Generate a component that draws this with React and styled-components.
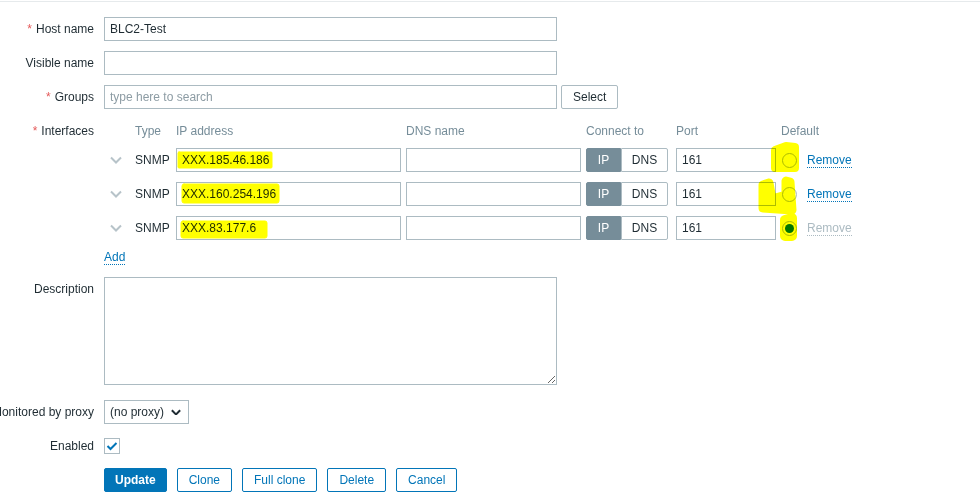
import styled, { createGlobalStyle } from "styled-components";

const GlobalStyle = createGlobalStyle`
  body {
    margin: 0;
    background: #fff;
    font-family: "Liberation Sans", Arial, sans-serif;
    font-size: 12px;
    color: #1f2c33;
  }
`;

const Page = styled.div`
  position: relative;
  isolation: isolate;
  width: 980px;
  height: 504px;
  overflow: hidden;
  background: #fff;
  box-sizing: border-box;
  padding-top: 1px;
`;

const TopRule = styled.div`
  height: 1px;
  background: #e6eaec;
`;

const Form = styled.div`
  display: flex;
  flex-direction: column;
  gap: 10px;
  padding-top: 15px;
`;

const FormRow = styled.div`
  display: flex;
  align-items: flex-start;
  gap: 10px;
  margin-top: ${(p) => p.$offset || 0}px;
`;

const Label = styled.div`
  width: 94px;
  flex-shrink: 0;
  height: 24px;
  display: flex;
  justify-content: flex-end;
  align-items: center;
  white-space: nowrap;
`;

const Required = styled.span`
  color: #e45959;
  margin-right: 4px;
`;

const Field = styled.div`
  display: flex;
  align-items: center;
  gap: ${(p) => p.$gap || 0}px;
  min-height: 24px;
`;

const TextInput = styled.input`
  box-sizing: border-box;
  width: ${(p) => p.$width}px;
  height: 24px;
  margin: 0;
  padding: 0 5px;
  border: 1px solid #acbbc2;
  border-radius: 0;
  background: #fff;
  font: inherit;
  color: #1f2c33;
  outline: none;

  &::placeholder {
    color: #8d9ca4;
  }
`;

const TextArea = styled.textarea`
  display: block;
  box-sizing: border-box;
  width: 453px;
  height: 108px;
  margin: 0;
  padding: 4px 5px;
  border: 1px solid #acbbc2;
  font: inherit;
  color: #1f2c33;
  resize: both;
  outline: none;
`;

const GreyButton = styled.button`
  box-sizing: border-box;
  height: 24px;
  padding: 0 11px;
  border: 1px solid #acbbc2;
  border-radius: 2px;
  background: #fff;
  font: inherit;
  color: #1f2c33;
`;

const Table = styled.div`
  display: flex;
  flex-direction: column;
`;

const columns = "31px 41px 230px 180px 90px 105px auto";

const HeadRow = styled.div`
  display: grid;
  grid-template-columns: ${columns};
  height: 24px;
  align-items: center;
  margin-bottom: 5px;
  color: #768d99;
`;

const IfaceRow = styled.div`
  display: grid;
  grid-template-columns: ${columns};
  height: 24px;
  align-items: center;
  margin-bottom: 10px;
`;

const Caret = styled.div`
  display: flex;
  padding-left: 6px;
`;

const Toggle = styled.div`
  display: flex;
  width: 82px;
  height: 24px;
  box-sizing: border-box;
`;

const ToggleSide = styled.div`
  box-sizing: border-box;
  display: flex;
  align-items: center;
  justify-content: center;
  height: 24px;
  width: ${(p) => (p.$on ? 35 : 47)}px;
  background: ${(p) => (p.$on ? "#768d99" : "#fff")};
  color: ${(p) => (p.$on ? "#fff" : "#1f2c33")};
  border: 1px solid ${(p) => (p.$on ? "#768d99" : "#acbbc2")};
  border-radius: ${(p) => (p.$on ? "2px 0 0 2px" : "0 2px 2px 0")};
`;

const DefaultCell = styled.div`
  display: flex;
  align-items: center;
  padding-left: 1px;
  gap: 10px;
`;

const Radio = styled.span`
  box-sizing: border-box;
  width: 15px;
  height: 15px;
  border-radius: 50%;
  border: 1px solid #acbbc2;
  background: #fff;
  display: flex;
  align-items: center;
  justify-content: center;

  &::after {
    content: "";
    display: ${(p) => (p.$checked ? "block" : "none")};
    width: 9px;
    height: 9px;
    border-radius: 50%;
    background: #0275b8;
  }
`;

const Link = styled.span`
  color: ${(p) => (p.$disabled ? "#acbbc2" : "#0275b8")};
  border-bottom: 1px dotted ${(p) => (p.$disabled ? "#acbbc2" : "#0275b8")};
  line-height: 14px;
  cursor: pointer;
`;

const AddLine = styled.div`
  height: 17px;
`;

const SelectBox = styled.div`
  box-sizing: border-box;
  width: 85px;
  height: 24px;
  border: 1px solid #acbbc2;
  display: flex;
  align-items: center;
  justify-content: space-between;
  padding: 0 7px 0 5px;
`;

const CheckBox = styled.span`
  box-sizing: border-box;
  width: 16px;
  height: 16px;
  border: 1px solid #acbbc2;
  display: flex;
  align-items: center;
  justify-content: center;
`;

const Buttons = styled.div`
  display: flex;
  gap: 10px;
  padding-left: 104px;
`;

const ActionButton = styled.button`
  box-sizing: border-box;
  height: 24px;
  padding: 0 ${(p) => (p.$primary ? 10 : 11)}px;
  border: 1px solid #0275b8;
  border-radius: 2px;
  background: ${(p) => (p.$primary ? "#0275b8" : "#fff")};
  color: ${(p) => (p.$primary ? "#fff" : "#0275b8")};
  font: inherit;
  font-weight: ${(p) => (p.$primary ? "bold" : "normal")};
`;

const Marker = styled.svg`
  position: absolute;
  left: 0;
  top: 0;
  pointer-events: none;
  mix-blend-mode: multiply;
`;

const interfaces = [
  { ip: "XXX.185.46.186", main: false },
  { ip: "XXX.160.254.196", main: false },
  { ip: "XXX.83.177.6", main: true },
];

const ChevronDown = ({ color, weight, size = 12 }) => (
  <svg width={size} height={size * 0.67} viewBox="0 0 12 8">
    <path d="M1 1.5 L6 6.5 L11 1.5" fill="none" stroke={color} strokeWidth={weight} />
  </svg>
);

const App = () => (
  <Page>
    <GlobalStyle />
    <TopRule />
    <Form>
      <FormRow>
        <Label>
          <Required>*</Required>Host name
        </Label>
        <Field>
          <TextInput $width={453} defaultValue="BLC2-Test" />
        </Field>
      </FormRow>
      <FormRow>
        <Label>Visible name</Label>
        <Field>
          <TextInput $width={453} defaultValue="" />
        </Field>
      </FormRow>
      <FormRow>
        <Label>
          <Required>*</Required>Groups
        </Label>
        <Field $gap={4}>
          <TextInput $width={453} placeholder="type here to search" />
          <GreyButton>Select</GreyButton>
        </Field>
      </FormRow>
      <FormRow>
        <Label>
          <Required>*</Required>Interfaces
        </Label>
        <Table>
          <HeadRow>
            <span />
            <span>Type</span>
            <span>IP address</span>
            <span>DNS name</span>
            <span>Connect to</span>
            <span>Port</span>
            <span>Default</span>
          </HeadRow>
          {interfaces.map((iface) => (
            <IfaceRow key={iface.ip}>
              <Caret>
                <ChevronDown color="#b7c3c9" weight={2} />
              </Caret>
              <span>SNMP</span>
              <TextInput $width={225} defaultValue={iface.ip} />
              <TextInput $width={175} defaultValue="" />
              <Toggle>
                <ToggleSide $on>IP</ToggleSide>
                <ToggleSide>DNS</ToggleSide>
              </Toggle>
              <TextInput $width={100} defaultValue="161" />
              <DefaultCell>
                <Radio $checked={iface.main} />
                <Link $disabled={iface.main}>Remove</Link>
              </DefaultCell>
            </IfaceRow>
          ))}
          <AddLine>
            <Link>Add</Link>
          </AddLine>
        </Table>
      </FormRow>
      <FormRow>
        <Label>Description</Label>
        <TextArea />
      </FormRow>
      <FormRow $offset={5}>
        <Label>Monitored by proxy</Label>
        <SelectBox>
          <span>(no proxy)</span>
          <ChevronDown color="#1f2c33" weight={2.4} size={10} />
        </SelectBox>
      </FormRow>
      <FormRow>
        <Label>Enabled</Label>
        <Field>
          <CheckBox>
            <svg width="12" height="10" viewBox="0 0 12 10">
              <path d="M1.5 5 L4.5 8 L10.5 2" fill="none" stroke="#0275b8" strokeWidth="2" />
            </svg>
          </CheckBox>
        </Field>
      </FormRow>
      <Buttons>
        <ActionButton $primary>Update</ActionButton>
        <ActionButton>Clone</ActionButton>
        <ActionButton>Full clone</ActionButton>
        <ActionButton>Delete</ActionButton>
        <ActionButton>Cancel</ActionButton>
      </Buttons>
    </Form>

    {/* highlighter strokes over the address list */}
    <Marker width="980" height="504" viewBox="0 0 980 504">
      <g fill="#ffff00" stroke="#ffff00" strokeLinejoin="round" strokeLinecap="round">
        <rect x="178" y="152" width="94" height="16" rx="1" strokeWidth="1" />
        <rect x="182" y="184" width="97" height="19" rx="2" strokeWidth="1" />
        <rect x="181" y="221" width="86" height="17" rx="2" strokeWidth="1" />
        <path d="M775 150 L775 168 L795 168 L795 147 L786 146 Z" strokeWidth="8" />
        <path d="M763 185 L763 208 L792 210 L790 182 L786 181 L786 195 L772 199 L769 183 Z" strokeWidth="9" />
        <path d="M785 220 L785 236 L792 236 L792 218 Z" strokeWidth="10" />
      </g>
    </Marker>
  </Page>
);

export default App;
